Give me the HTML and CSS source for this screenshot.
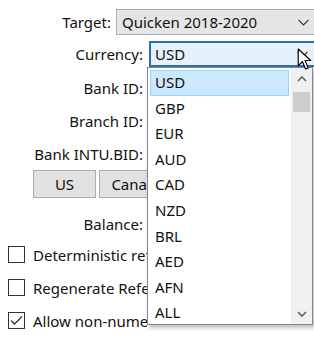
FILE: index.html
```html
<!DOCTYPE html>
<html lang="en">
<head>
  <meta charset="UTF-8" />
  <title>Export settings</title>
  <link rel="stylesheet" href="styles.css">
</head>
<body>
  <div class="dialog">
    <div class="row">
      <span class="label narrow">Target:</span>
      <div class="combo">
        <span>Quicken 2018-2020</span>
        <svg class="chev" width="11" height="7" viewBox="0 0 11 7"><polyline points="0.5,0.8 5.5,5.8 10.5,0.8" fill="none" stroke="#333" stroke-width="1.2"/></svg>
      </div>
    </div>
    <div class="row currency">
      <span class="label">Currency:</span>
      <div class="combo focused">
        <span>USD</span>
        <svg class="chev" width="11" height="7" viewBox="0 0 11 7"><polyline points="0.5,0.8 5.5,5.8 10.5,0.8" fill="none" stroke="#333" stroke-width="1.2"/></svg>
      </div>
    </div>
    <div class="row field"><span class="label">Bank ID:</span></div>
    <div class="row field"><span class="label">Branch ID:</span></div>
    <div class="row field"><span class="label">Bank INTU.BID:</span></div>
    <div class="buttons">
      <button class="btn">US</button>
      <button class="btn wide">Canada</button>
    </div>
    <div class="row balance"><span class="label">Balance:</span></div>
    <div class="check"><span class="box"></span><span class="text">Deterministic references</span></div>
    <div class="check"><span class="box"></span><span class="text">Regenerate References</span></div>
    <div class="check"><span class="box"><svg width="13" height="11" viewBox="0 0 13 11"><polyline points="1,5.5 4.5,9 12,1.5" fill="none" stroke="#333" stroke-width="1.3"/></svg></span><span class="text">Allow non-numeric IDs</span></div>
  </div>

  <div class="dropdown">
    <ul class="options">
      <li class="selected">USD</li>
      <li>GBP</li>
      <li>EUR</li>
      <li>AUD</li>
      <li>CAD</li>
      <li>NZD</li>
      <li>BRL</li>
      <li>AED</li>
      <li>AFN</li>
      <li>ALL</li>
    </ul>
    <div class="scrollbar">
      <div class="arrow"><svg width="10" height="6" viewBox="0 0 10 6"><polyline points="1,5 5,1 9,5" fill="none" stroke="#606060" stroke-width="1.6"/></svg></div>
      <div class="track"><div class="thumb"></div></div>
      <div class="arrow"><svg width="10" height="6" viewBox="0 0 10 6"><polyline points="1,1 5,5 9,1" fill="none" stroke="#606060" stroke-width="1.6"/></svg></div>
    </div>
  </div>

  <svg class="cursor" width="15" height="23" viewBox="0 0 14 22">
    <path d="M1 1 L1 17 L5 13 L8 20 L10.5 19 L7.5 12 L13 12 Z" fill="#fff" stroke="#000" stroke-width="1.1" stroke-linejoin="round"/>
  </svg>
</body>
</html>
```

FILE: styles.css
```css
* {
  box-sizing: border-box;
}
body {
  margin: 0;
  background: #fff;
  font-family: "Noto Sans", "Open Sans", sans-serif;
  font-size: 15px;
  color: #111;
  overflow: hidden;
}
.dialog {
  padding-top: 9px;
  width: 320px;
}
.row {
  display: flex;
  align-items: center;
  gap: 5px;
  height: 26px;
  margin-bottom: 6px;
}
.row.currency {
  margin-bottom: 4px;
}
.row.field {
  height: 33px;
  margin-bottom: 0;
}
.label {
  width: 143px;
  text-align: right;
  white-space: nowrap;
}
.label.narrow {
  width: 111px;
}
.combo {
  flex: 1;
  height: 26px;
  display: flex;
  align-items: center;
  justify-content: space-between;
  padding: 0 8px 0 5px;
  background: #e5e5e5;
  border: 1px solid #adadad;
  margin-right: 1px;
}
.combo .chev {
  margin-right: 1px;
}
.combo.focused {
  margin-left: 1px;
  background: #e5f1fb;
  border: 2px solid #2c6fb0;
  padding-left: 4px;
  margin-right: 1px;
}
.buttons {
  display: flex;
  gap: 3px;
  width: 147px;
  overflow: hidden;
  padding-left: 33px;
}
.btn {
  font: inherit;
  color: inherit;
  height: 28px;
  width: 63px;
  flex-shrink: 0;
  padding: 0;
  background: #e1e1e1;
  border: 1px solid #adadad;
}
.btn.wide {
  width: 78px;
}
.row.balance {
  margin-top: 11px;
  height: 29px;
  margin-bottom: 0;
}
.check {
  display: flex;
  align-items: center;
  gap: 8px;
  height: 33px;
  width: 147px;
  padding-left: 8px;
  white-space: nowrap;
  overflow: hidden;
}
.check .text {
  flex-shrink: 0;
}
.box {
  width: 17px;
  height: 17px;
  border: 1px solid #333;
  background: #fff;
  display: flex;
  align-items: center;
  justify-content: center;
  flex-shrink: 0;
}
.dropdown {
  position: absolute;
  left: 147px;
  top: 67px;
  width: 166px;
  height: 258px;
  background: #fff;
  border: 1px solid #828790;
  box-shadow: 2px 3px 4px rgba(0, 0, 0, 0.25);
  display: flex;
  overflow: hidden;
}
.options {
  list-style: none;
  margin: 0;
  padding: 2px 2px 0 2px;
  flex: 1;
}
.options li {
  height: 25.6px;
  line-height: 25.6px;
  padding-left: 5px;
}
.options li.selected {
  background: #cce8ff;
  border: 1px solid #99d1ff;
  line-height: 23.6px;
  padding-left: 4px;
}
.scrollbar {
  width: 21px;
  background: #f0f0f0;
  display: flex;
  flex-direction: column;
}
.arrow {
  height: 21px;
  display: flex;
  align-items: center;
  justify-content: center;
}
.track {
  flex: 1;
  padding: 3px 2px;
}
.thumb {
  height: 20px;
  background: #cdcdcd;
}
.cursor {
  position: absolute;
  left: 297px;
  top: 48px;
}
```
